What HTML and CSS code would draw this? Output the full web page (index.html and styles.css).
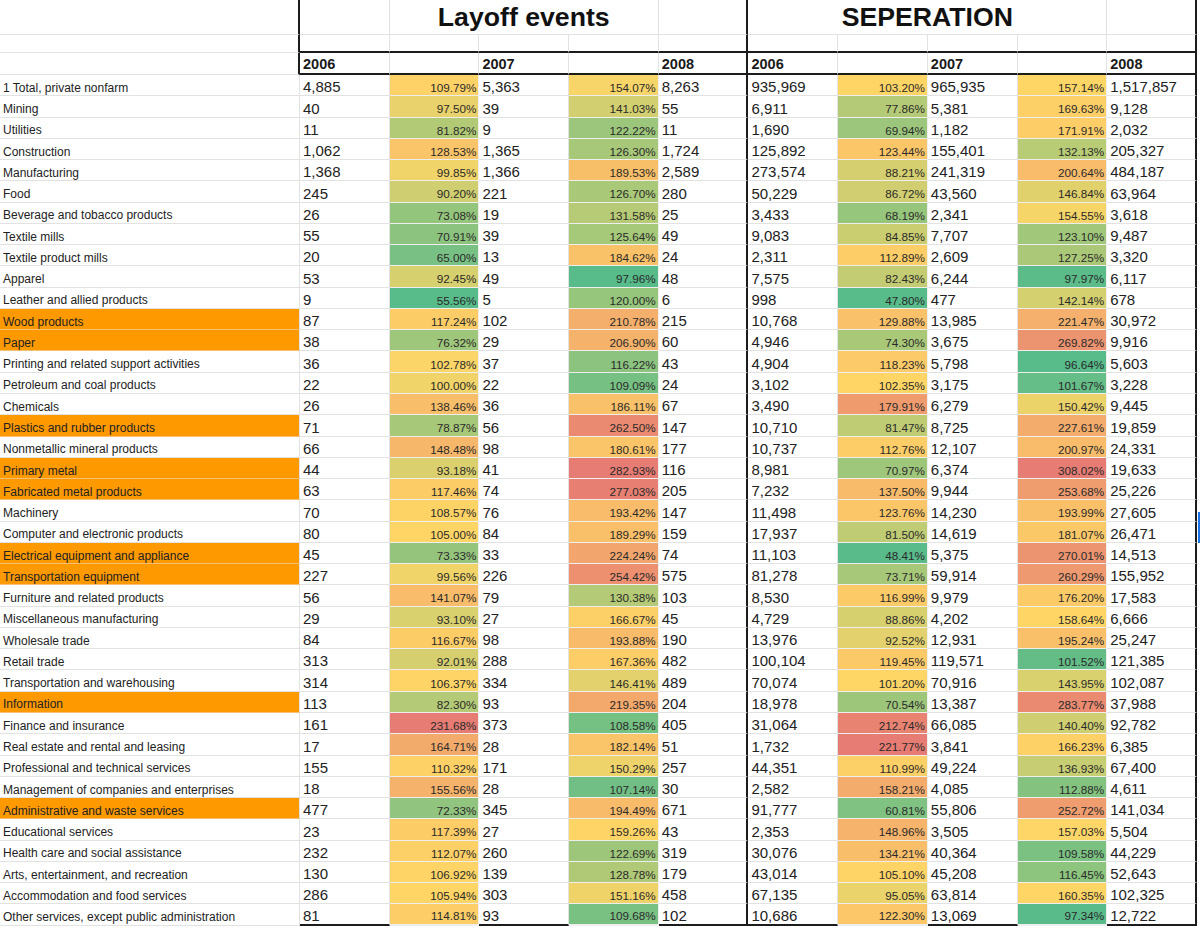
FILE: index.html
```html
<!DOCTYPE html>
<html lang="en">
<head>
<meta charset="utf-8">
<title>Layoff events / Seperation</title>
<link rel="stylesheet" href="styles.css">
</head>
<body>
<div class="page">
  <div class="sheet" id="sheet">
    <!-- row 1 -->
    <div class="c hdr-a"></div>
    <div class="c"></div>
    <div class="c title span3">Layoff events</div>
    <div class="c thick-r"></div>
    <div class="c title span4">SEPERATION</div>
    <div class="c thick-r"></div>
    <!-- row 2 -->
    <div class="c hdr-a"></div>
    <div class="c tb"></div>
    <div class="c tb"></div>
    <div class="c tb"></div>
    <div class="c tb"></div>
    <div class="c tb thick-r"></div>
    <div class="c tb"></div>
    <div class="c tb"></div>
    <div class="c tb"></div>
    <div class="c tb"></div>
    <div class="c tb thick-r"></div>
    <!-- row 3 -->
    <div class="c hdr-a"></div>
    <div class="c tb year">2006</div>
    <div class="c tb"></div>
    <div class="c tb year">2007</div>
    <div class="c tb"></div>
    <div class="c tb year thick-r">2008</div>
    <div class="c tb year">2006</div>
    <div class="c tb"></div>
    <div class="c tb year">2007</div>
    <div class="c tb"></div>
    <div class="c tb year thick-r">2008</div>
  </div>
  <div class="sel-mark"></div>
</div>
<script src="script.js"></script>
</body>
</html>
```

FILE: styles.css
```css
html, body {
  margin: 0;
  padding: 0;
  background: #ffffff;
}

.page {
  position: relative;
  width: 1200px;
  height: 929px;
  overflow: hidden;
  font-family: "Liberation Sans", Arial, sans-serif;
  color: #1f1f1f;
}

.sheet {
  display: grid;
  grid-template-columns: 300px repeat(10, 89.7px);
  grid-template-rows: 35px 18px 22px repeat(40, 21.275px);
}

.c {
  box-sizing: border-box;
  border-right: 1px solid #e2e2e2;
  border-bottom: 1px solid #e2e2e2;
  display: flex;
  align-items: flex-end;
  padding: 0 3px 1.5px 3px;
  white-space: nowrap;
  overflow: hidden;
  line-height: 1;
  min-width: 0;
}

.hdr-a {
  border-right: 2px solid #1c1c1c;
}

.thick-r {
  border-right: 2px solid #1c1c1c;
}

.tb {
  border-bottom: 2px solid #1c1c1c;
}

.lastb {
  border-bottom: 2px solid #1c1c1c;
}

.span3 {
  grid-column: span 3;
}

.span4 {
  grid-column: span 4;
}

.title {
  justify-content: center;
  font-weight: 700;
  font-size: 26.67px;
  color: #111111;
  padding-bottom: 3px;
  overflow: visible;
}

.year {
  font-weight: 700;
  font-size: 14.5px;
  color: #1a1a1a;
  padding-bottom: 2px;
}

.lbl {
  font-size: 12px;
  color: #222222;
}

.lbl.hl {
  background: #ff9900;
  border-bottom-color: #f6bf72;
}

.num {
  font-size: 15px;
  color: #222222;
  padding-bottom: 1px;
}

.pct {
  font-size: 11.7px;
  justify-content: flex-end;
  padding-right: 2px;
  color: #2a2a2a;
  border-right-color: #eeeeee;
  border-bottom-color: #eeeeee;
}

.sel-mark {
  position: absolute;
  left: 1198px;
  top: 512px;
  width: 2px;
  height: 31px;
  background: #1a73e8;
}
```

FILE: script.js
```js
(function () {
  var rows = [
    ["1 Total, private nonfarm", 0, "4,885", "109.79%", "5,363", "154.07%", "8,263", "935,969", "103.20%", "965,935", "157.14%", "1,517,857"],
    ["Mining", 0, "40", "97.50%", "39", "141.03%", "55", "6,911", "77.86%", "5,381", "169.63%", "9,128"],
    ["Utilities", 0, "11", "81.82%", "9", "122.22%", "11", "1,690", "69.94%", "1,182", "171.91%", "2,032"],
    ["Construction", 0, "1,062", "128.53%", "1,365", "126.30%", "1,724", "125,892", "123.44%", "155,401", "132.13%", "205,327"],
    ["Manufacturing", 0, "1,368", "99.85%", "1,366", "189.53%", "2,589", "273,574", "88.21%", "241,319", "200.64%", "484,187"],
    ["Food", 0, "245", "90.20%", "221", "126.70%", "280", "50,229", "86.72%", "43,560", "146.84%", "63,964"],
    ["Beverage and tobacco products", 0, "26", "73.08%", "19", "131.58%", "25", "3,433", "68.19%", "2,341", "154.55%", "3,618"],
    ["Textile mills", 0, "55", "70.91%", "39", "125.64%", "49", "9,083", "84.85%", "7,707", "123.10%", "9,487"],
    ["Textile product mills", 0, "20", "65.00%", "13", "184.62%", "24", "2,311", "112.89%", "2,609", "127.25%", "3,320"],
    ["Apparel", 0, "53", "92.45%", "49", "97.96%", "48", "7,575", "82.43%", "6,244", "97.97%", "6,117"],
    ["Leather and allied products", 0, "9", "55.56%", "5", "120.00%", "6", "998", "47.80%", "477", "142.14%", "678"],
    ["Wood products", 1, "87", "117.24%", "102", "210.78%", "215", "10,768", "129.88%", "13,985", "221.47%", "30,972"],
    ["Paper", 1, "38", "76.32%", "29", "206.90%", "60", "4,946", "74.30%", "3,675", "269.82%", "9,916"],
    ["Printing and related support activities", 0, "36", "102.78%", "37", "116.22%", "43", "4,904", "118.23%", "5,798", "96.64%", "5,603"],
    ["Petroleum and coal products", 0, "22", "100.00%", "22", "109.09%", "24", "3,102", "102.35%", "3,175", "101.67%", "3,228"],
    ["Chemicals", 0, "26", "138.46%", "36", "186.11%", "67", "3,490", "179.91%", "6,279", "150.42%", "9,445"],
    ["Plastics and rubber products", 1, "71", "78.87%", "56", "262.50%", "147", "10,710", "81.47%", "8,725", "227.61%", "19,859"],
    ["Nonmetallic mineral products", 0, "66", "148.48%", "98", "180.61%", "177", "10,737", "112.76%", "12,107", "200.97%", "24,331"],
    ["Primary metal", 1, "44", "93.18%", "41", "282.93%", "116", "8,981", "70.97%", "6,374", "308.02%", "19,633"],
    ["Fabricated metal products", 1, "63", "117.46%", "74", "277.03%", "205", "7,232", "137.50%", "9,944", "253.68%", "25,226"],
    ["Machinery", 0, "70", "108.57%", "76", "193.42%", "147", "11,498", "123.76%", "14,230", "193.99%", "27,605"],
    ["Computer and electronic products", 0, "80", "105.00%", "84", "189.29%", "159", "17,937", "81.50%", "14,619", "181.07%", "26,471"],
    ["Electrical equipment and appliance", 1, "45", "73.33%", "33", "224.24%", "74", "11,103", "48.41%", "5,375", "270.01%", "14,513"],
    ["Transportation equipment", 1, "227", "99.56%", "226", "254.42%", "575", "81,278", "73.71%", "59,914", "260.29%", "155,952"],
    ["Furniture and related products", 0, "56", "141.07%", "79", "130.38%", "103", "8,530", "116.99%", "9,979", "176.20%", "17,583"],
    ["Miscellaneous manufacturing", 0, "29", "93.10%", "27", "166.67%", "45", "4,729", "88.86%", "4,202", "158.64%", "6,666"],
    ["Wholesale trade", 0, "84", "116.67%", "98", "193.88%", "190", "13,976", "92.52%", "12,931", "195.24%", "25,247"],
    ["Retail trade", 0, "313", "92.01%", "288", "167.36%", "482", "100,104", "119.45%", "119,571", "101.52%", "121,385"],
    ["Transportation and warehousing", 0, "314", "106.37%", "334", "146.41%", "489", "70,074", "101.20%", "70,916", "143.95%", "102,087"],
    ["Information", 1, "113", "82.30%", "93", "219.35%", "204", "18,978", "70.54%", "13,387", "283.77%", "37,988"],
    ["Finance and insurance", 0, "161", "231.68%", "373", "108.58%", "405", "31,064", "212.74%", "66,085", "140.40%", "92,782"],
    ["Real estate and rental and leasing", 0, "17", "164.71%", "28", "182.14%", "51", "1,732", "221.77%", "3,841", "166.23%", "6,385"],
    ["Professional and technical services", 0, "155", "110.32%", "171", "150.29%", "257", "44,351", "110.99%", "49,224", "136.93%", "67,400"],
    ["Management of companies and enterprises", 0, "18", "155.56%", "28", "107.14%", "30", "2,582", "158.21%", "4,085", "112.88%", "4,611"],
    ["Administrative and waste services", 1, "477", "72.33%", "345", "194.49%", "671", "91,777", "60.81%", "55,806", "252.72%", "141,034"],
    ["Educational services", 0, "23", "117.39%", "27", "159.26%", "43", "2,353", "148.96%", "3,505", "157.03%", "5,504"],
    ["Health care and social assistance", 0, "232", "112.07%", "260", "122.69%", "319", "30,076", "134.21%", "40,364", "109.58%", "44,229"],
    ["Arts, entertainment, and recreation", 0, "130", "106.92%", "139", "128.78%", "179", "43,014", "105.10%", "45,208", "116.45%", "52,643"],
    ["Accommodation and food services", 0, "286", "105.94%", "303", "151.16%", "458", "67,135", "95.05%", "63,814", "160.35%", "102,325"],
    ["Other services, except public administration", 0, "81", "114.81%", "93", "109.68%", "102", "10,686", "122.30%", "13,069", "97.34%", "12,722"]
  ];

  var LO = [87, 187, 138], MID = [255, 214, 102], HI = [230, 124, 115];
  var pctCols = [3, 5, 8, 10];
  var scales = {};

  pctCols.forEach(function (ci) {
    var vals = rows.map(function (r) { return parseFloat(r[ci]); });
    var s = vals.slice().sort(function (a, b) { return a - b; });
    var pos = (s.length - 1) * 0.5;
    var lo = Math.floor(pos), f = pos - lo;
    var med = s[lo] + (s[Math.min(lo + 1, s.length - 1)] - s[lo]) * f;
    scales[ci] = { min: s[0], mid: med, max: s[s.length - 1] };
  });

  function mix(a, b, t) {
    t = Math.max(0, Math.min(1, t));
    return "rgb(" + [0, 1, 2].map(function (i) {
      return Math.round(a[i] + (b[i] - a[i]) * t);
    }).join(",") + ")";
  }

  function colorFor(ci, v) {
    var sc = scales[ci];
    if (v <= sc.mid) {
      return mix(LO, MID, (v - sc.min) / ((sc.mid - sc.min) || 1));
    }
    return mix(MID, HI, (v - sc.mid) / ((sc.max - sc.mid) || 1));
  }

  var sheet = document.getElementById("sheet");
  var frag = document.createDocumentFragment();

  rows.forEach(function (r, ri) {
    var last = ri === rows.length - 1;
    var lbl = document.createElement("div");
    lbl.className = "c lbl" + (r[1] ? " hl" : "");
    lbl.textContent = r[0];
    frag.appendChild(lbl);

    for (var ci = 2; ci <= 11; ci++) {
      var d = document.createElement("div");
      var isPct = pctCols.indexOf(ci) !== -1;
      var cls = "c " + (isPct ? "pct" : "num");
      if (ci === 6 || ci === 11) cls += " thick-r";
      if (last) cls += " lastb";
      d.className = cls;
      d.textContent = r[ci];
      if (isPct) {
        d.style.backgroundColor = colorFor(ci, parseFloat(r[ci]));
      }
      frag.appendChild(d);
    }
  });

  sheet.appendChild(frag);
})();
```
